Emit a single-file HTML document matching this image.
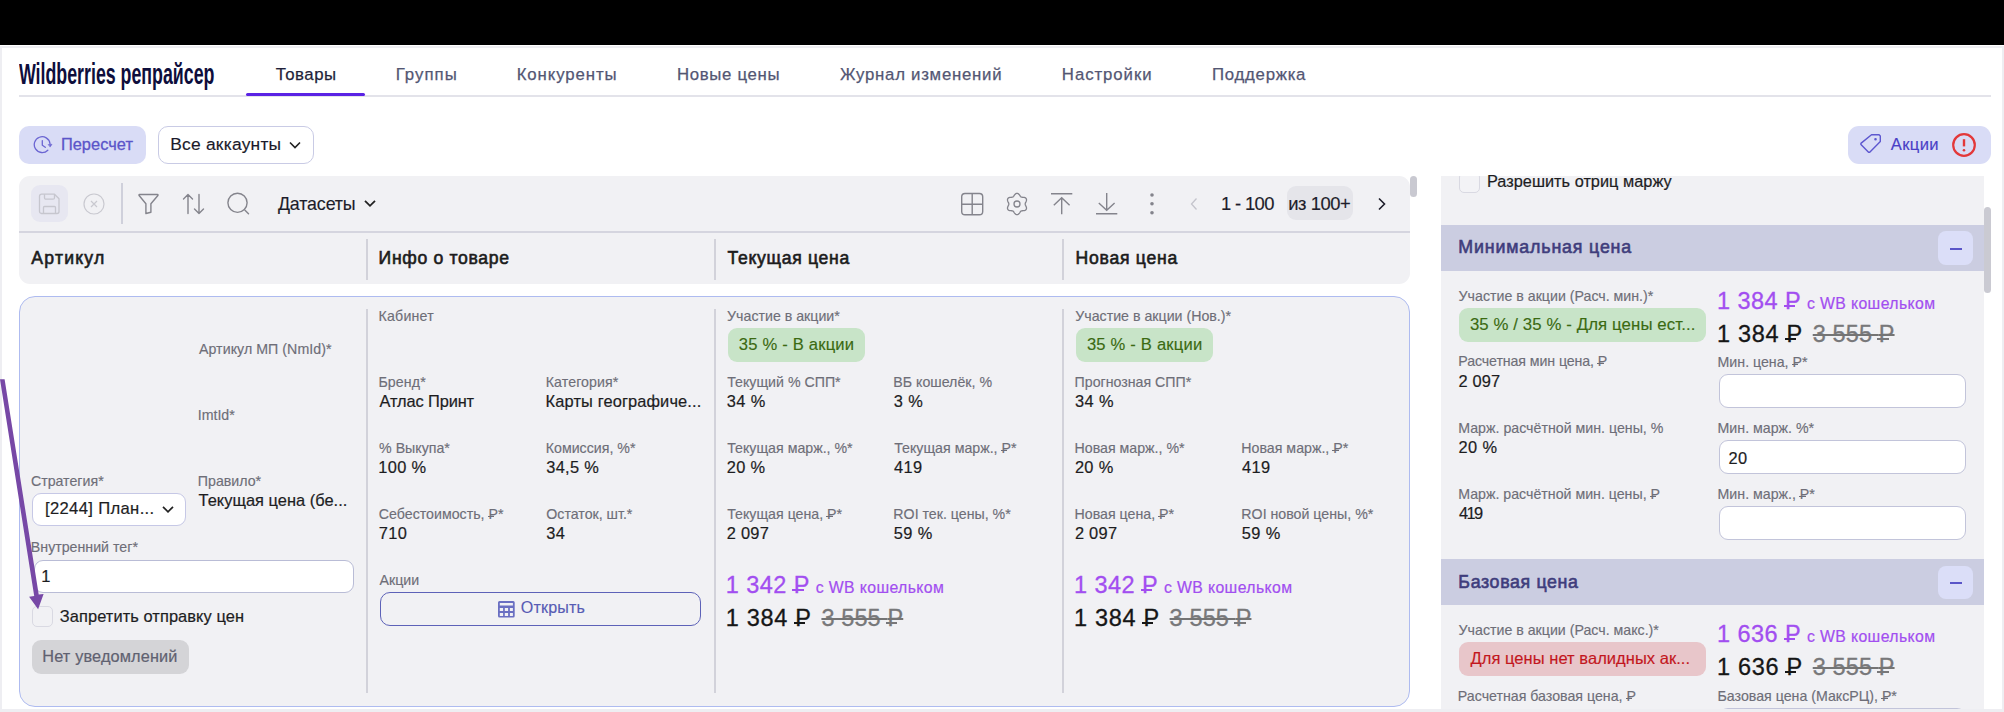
<!DOCTYPE html>
<html><head><meta charset="utf-8"><style>
html,body{margin:0;padding:0;}
body{width:2004px;height:712px;position:relative;overflow:hidden;background:#fff;font-family:"Liberation Sans", sans-serif;}
body>div,body>span,body>svg{position:absolute;}
.t{line-height:1;white-space:nowrap;}
.rub{position:relative;}
.rub::after{content:"";position:absolute;left:-0.06em;width:0.48em;top:0.71em;height:0.08em;background:currentColor;}
</style></head><body>
<div style="left:0px;top:0px;width:2004px;height:45px;background:#000"></div>
<div style="left:0px;top:46px;width:2004px;height:1.5px;background:#eeeef2"></div>
<span class="t" style="left:18.5px;top:60px;font-size:29px;color:#0e0e3c;font-weight:700;transform:scaleX(0.613);transform-origin:0 0;">Wildberries репрайсер</span>
<span class="t" style="left:275.65px;top:67.00px;font-size:16.8px;color:#1f1f3a;font-weight:400;letter-spacing:0.550px;-webkit-text-stroke:0.25px #1f1f3a;">Товары</span>
<span class="t" style="left:395.65px;top:67.00px;font-size:16.8px;color:#535673;font-weight:400;letter-spacing:1.045px;-webkit-text-stroke:0.25px #535673;">Группы</span>
<span class="t" style="left:516.65px;top:67.00px;font-size:16.8px;color:#535673;font-weight:400;letter-spacing:0.903px;-webkit-text-stroke:0.25px #535673;">Конкуренты</span>
<span class="t" style="left:676.95px;top:67.00px;font-size:16.8px;color:#535673;font-weight:400;letter-spacing:0.678px;-webkit-text-stroke:0.25px #535673;">Новые цены</span>
<span class="t" style="left:839.98px;top:67.00px;font-size:16.8px;color:#535673;font-weight:400;letter-spacing:0.743px;-webkit-text-stroke:0.25px #535673;">Журнал изменений</span>
<span class="t" style="left:1061.85px;top:67.00px;font-size:16.8px;color:#535673;font-weight:400;letter-spacing:0.928px;-webkit-text-stroke:0.25px #535673;">Настройки</span>
<span class="t" style="left:1212.05px;top:67.00px;font-size:16.8px;color:#535673;font-weight:400;letter-spacing:0.728px;-webkit-text-stroke:0.25px #535673;">Поддержка</span>
<div style="left:19px;top:95px;width:1972px;height:1.5px;background:#e3e3ea"></div>
<div style="left:246px;top:92.5px;width:119px;height:3px;background:#5a22e4;border-radius:2px"></div>
<div style="left:19px;top:126px;width:127px;height:37.5px;background:#d9dcf6;border-radius:10px"></div>
<svg style="left:33px;top:135px" width="20" height="20" viewBox="0 0 20 20" fill="none" stroke="#6b65d2" stroke-width="1.3" stroke-linecap="round"><path d="M14.8 15.2A7.9 7.9 0 1 1 17.0 8.6"/><path d="M15.5 9.5L19.0 9.3 17.3 11.8z" fill="#6b65d2" stroke-width="0.6" stroke-linejoin="round"/><path d="M9.3 5.6V10.2L12.3 12.3"/></svg>
<span class="t" style="left:60.90px;top:136.00px;font-size:16.4px;color:#5b55c9;font-weight:400;letter-spacing:0.036px;-webkit-text-stroke:0.3px #5b55c9;">Пересчет</span>
<div style="left:158px;top:126px;width:155.5px;height:37.5px;background:#fff;border:1px solid #c9cbe5;border-radius:10px;box-sizing:border-box"></div>
<span class="t" style="left:170.17px;top:136.00px;font-size:17.4px;color:#1a1a2a;font-weight:400;letter-spacing:0.241px;-webkit-text-stroke:0.15px #1a1a2a;">Все аккаунты</span>
<svg style="left:289px;top:141px" width="12" height="8" viewBox="0 0 12 8" fill="none" stroke="#222" stroke-width="1.6"><path d="M1 1.5l5 5 5-5"/></svg>
<div style="left:1847.5px;top:126px;width:143.5px;height:37.5px;background:#d9dcf6;border-radius:11px"></div>
<svg style="left:1859px;top:133px" width="24" height="24" viewBox="0 0 24 24" fill="none" stroke="#5d57cf" stroke-width="1.4" stroke-linejoin="round"><path d="M12.5 1.8h7.6l1.2 1.2v5.6L11 18.9a1.2 1.2 0 0 1-1.7 0L2.2 11.8a1.2 1.2 0 0 1 0-1.7z"/><circle cx="16.5" cy="6.3" r="0.6" fill="#5d57cf"/></svg>
<span class="t" style="left:1890.85px;top:137.00px;font-size:16.6px;color:#4a3fc6;font-weight:400;letter-spacing:0.338px;-webkit-text-stroke:0.15px #4a3fc6;">Акции</span>
<svg style="left:1951px;top:132px" width="26" height="26" viewBox="0 0 26 26" fill="none"><circle cx="13" cy="13" r="10.8" stroke="#e3383a" stroke-width="2.2"/><path d="M13 7.2v7.2" stroke="#e3383a" stroke-width="2.4"/><circle cx="13" cy="18.3" r="1.3" fill="#e3383a"/></svg>
<div style="left:19px;top:176px;width:1391px;height:57px;background:#f1f1f4;border-radius:11px 11px 0 0"></div>
<div style="left:19px;top:231px;width:1391px;height:2px;background:#d5d5df"></div>
<div style="left:31px;top:185px;width:37px;height:37px;background:#e7e7f1;border-radius:9px"></div>
<svg style="left:38px;top:193px" width="23" height="22" viewBox="0 0 23 22" fill="none" stroke="#c6c6ce" stroke-width="1.3" stroke-linejoin="round"><path d="M3.5 1.2h13l4.5 4.5v12.8a2 2 0 0 1-2 2h-15.5a2 2 0 0 1-2-2V3.2a2 2 0 0 1 2-2z"/><path d="M6.5 1.2v3.5a1.5 1.5 0 0 0 1.5 1.5h7a1.5 1.5 0 0 0 1.5-1.5V1.2"/><path d="M5.5 20.5v-6a1 1 0 0 1 1-1h10a1 1 0 0 1 1 1v6"/></svg>
<svg style="left:83px;top:193px" width="23" height="22" viewBox="0 0 23 22" fill="none" stroke="#c9c9d0" stroke-width="1.2"><circle cx="11" cy="11" r="10"/><path d="M8 8l6 6M14 8l-6 6"/></svg>
<div style="left:120.5px;top:183px;width:2px;height:40.5px;background:#cfd0db"></div>
<svg style="left:137px;top:193px" width="23" height="22" viewBox="0 0 23 22" fill="none" stroke="#84848c" stroke-width="1.4" stroke-linejoin="round"><path d="M2.5 1.5h18a.6.6 0 0 1 .4 1l-7 8.2v8.5l-5 1.3v-9.8l-6.8-8.2a.6.6 0 0 1 .4-1z"/></svg>
<svg style="left:182px;top:193px" width="23" height="22" viewBox="0 0 23 22" fill="none" stroke="#84848c" stroke-width="1.4" stroke-linecap="round" stroke-linejoin="round"><path d="M6 20.5V1.5M1.5 6L6 1.5 10.5 6M17 1.5v19M12.5 16l4.5 4.5 4.5-4.5"/></svg>
<svg style="left:227px;top:192px" width="24" height="24" viewBox="0 0 24 24" fill="none" stroke="#84848c" stroke-width="1.4" stroke-linecap="round"><circle cx="10.5" cy="10.8" r="9.6"/><path d="M18 18.3l3.5 3.5"/></svg>
<span class="t" style="left:277.90px;top:196.00px;font-size:17.8px;color:#1d1d2a;font-weight:400;letter-spacing:-0.104px;-webkit-text-stroke:0.15px #1d1d2a;">Датасеты</span>
<svg style="left:364px;top:199px" width="12" height="9" viewBox="0 0 12 9" fill="none" stroke="#222" stroke-width="1.8"><path d="M1 1.8l5 5 5-5"/></svg>
<svg style="left:960px;top:192px" width="24" height="24" viewBox="0 0 24 24" fill="none" stroke="#84848c" stroke-width="1.4"><rect x="1.7" y="1.5" width="21" height="21.3" rx="3.3"/><path d="M12.2 1.5v21.3M1.7 12.2h21"/></svg>
<svg style="left:1004.5px;top:191.5px" width="24" height="24" viewBox="0 0 24 24" fill="none" stroke="#84848c" stroke-width="1.3" stroke-linejoin="round"><path d="M20.15 12.00 L20.20 12.43 L20.34 12.88 L20.56 13.36 L20.82 13.87 L21.08 14.43 L21.31 15.02 L21.46 15.63 L21.51 16.23 L21.43 16.81 L21.22 17.32 L20.88 17.77 L20.42 18.12 L19.88 18.38 L19.27 18.55 L18.65 18.65 L18.03 18.70 L17.45 18.73 L16.93 18.79 L16.47 18.89 L16.08 19.06 L15.73 19.32 L15.41 19.66 L15.11 20.09 L14.79 20.57 L14.43 21.08 L14.03 21.57 L13.59 22.01 L13.09 22.35 L12.55 22.57 L12.00 22.65 L11.45 22.57 L10.91 22.35 L10.41 22.01 L9.97 21.57 L9.57 21.08 L9.21 20.57 L8.89 20.09 L8.59 19.66 L8.27 19.32 L7.93 19.06 L7.53 18.89 L7.07 18.79 L6.55 18.73 L5.97 18.70 L5.35 18.65 L4.73 18.55 L4.12 18.38 L3.58 18.12 L3.12 17.77 L2.78 17.32 L2.57 16.81 L2.49 16.23 L2.54 15.63 L2.69 15.02 L2.92 14.43 L3.18 13.87 L3.44 13.36 L3.66 12.88 L3.80 12.43 L3.85 12.00 L3.80 11.57 L3.66 11.12 L3.44 10.64 L3.18 10.13 L2.92 9.57 L2.69 8.98 L2.54 8.37 L2.49 7.77 L2.57 7.19 L2.78 6.68 L3.12 6.23 L3.58 5.88 L4.12 5.62 L4.73 5.45 L5.35 5.35 L5.97 5.30 L6.55 5.27 L7.07 5.21 L7.53 5.11 L7.92 4.94 L8.27 4.68 L8.59 4.34 L8.89 3.91 L9.21 3.43 L9.57 2.92 L9.97 2.43 L10.41 1.99 L10.91 1.65 L11.45 1.43 L12.00 1.35 L12.55 1.43 L13.09 1.65 L13.59 1.99 L14.03 2.43 L14.43 2.92 L14.79 3.43 L15.11 3.91 L15.41 4.34 L15.73 4.68 L16.08 4.94 L16.47 5.11 L16.93 5.21 L17.45 5.27 L18.03 5.30 L18.65 5.35 L19.27 5.45 L19.88 5.62 L20.42 5.88 L20.88 6.23 L21.22 6.68 L21.43 7.19 L21.51 7.77 L21.46 8.37 L21.31 8.98 L21.08 9.57 L20.82 10.13 L20.56 10.64 L20.34 11.12 L20.20 11.57 L20.15 12.00z"/><circle cx="12" cy="12" r="3"/></svg>
<svg style="left:1050px;top:192px" width="24" height="24" viewBox="0 0 24 24" fill="none" stroke="#84848c" stroke-width="1.4" stroke-linecap="butt"><path d="M1 1.7h21.3M11.7 22.3V5.8M3.8 13.2L11.7 5.8 19.6 13.2"/></svg>
<svg style="left:1095px;top:192px" width="24" height="24" viewBox="0 0 24 24" fill="none" stroke="#84848c" stroke-width="1.4" stroke-linecap="butt"><path d="M1 21.7h21.3M11.7 1v17.2M3.8 11L11.7 18.2 19.6 11"/></svg>
<svg style="left:1146.5px;top:192px" width="10" height="24" viewBox="0 0 10 24" fill="#84848c"><circle cx="5" cy="3" r="1.8"/><circle cx="5" cy="11.8" r="1.8"/><circle cx="5" cy="20.8" r="1.8"/></svg>
<svg style="left:1189px;top:197px" width="10" height="14" viewBox="0 0 10 14" fill="none" stroke="#c4c4cc" stroke-width="1.3"><path d="M7.5 1.5L2.5 7 7.5 12.5"/></svg>
<span class="t" style="left:1221.08px;top:195.00px;font-size:18.4px;color:#1d1d2a;font-weight:400;letter-spacing:-0.654px;-webkit-text-stroke:0.15px #1d1d2a;">1 - 100</span>
<div style="left:1286.5px;top:186px;width:66px;height:34px;background:#e5e5ea;border-radius:9px"></div>
<span class="t" style="left:1288.20px;top:195.00px;font-size:18.4px;color:#1d1d2a;font-weight:400;letter-spacing:-0.438px;-webkit-text-stroke:0.15px #1d1d2a;">из 100+</span>
<svg style="left:1377px;top:197px" width="10" height="14" viewBox="0 0 10 14" fill="none" stroke="#1d1d2a" stroke-width="1.6"><path d="M2 1.5L7.5 7 2 12.5"/></svg>
<div style="left:1410px;top:176px;width:7px;height:21px;background:#c9c9d1;border-radius:4px"></div>
<div style="left:19px;top:233px;width:1391px;height:51px;background:#f1f1f4;border-radius:0 0 11px 11px"></div>
<div style="left:365.5px;top:238.5px;width:2px;height:41px;background:#d2d2da"></div>
<div style="left:713.5px;top:238.5px;width:2px;height:41px;background:#d2d2da"></div>
<div style="left:1062px;top:238.5px;width:2px;height:41px;background:#d2d2da"></div>
<span class="t" style="left:31.35px;top:250.00px;font-size:17.6px;color:#1c1c1c;font-weight:400;letter-spacing:1.217px;-webkit-text-stroke:0.6px #1c1c1c;">Артикул</span>
<span class="t" style="left:378.58px;top:250.00px;font-size:17.6px;color:#1c1c1c;font-weight:400;letter-spacing:0.679px;-webkit-text-stroke:0.6px #1c1c1c;">Инфо о товаре</span>
<span class="t" style="left:727.57px;top:250.00px;font-size:17.6px;color:#1c1c1c;font-weight:400;letter-spacing:0.684px;-webkit-text-stroke:0.6px #1c1c1c;">Текущая цена</span>
<span class="t" style="left:1075.57px;top:250.00px;font-size:17.6px;color:#1c1c1c;font-weight:400;letter-spacing:0.739px;-webkit-text-stroke:0.6px #1c1c1c;">Новая цена</span>
<div style="left:19px;top:296px;width:1391px;height:411px;background:#f1f1f4;border:1.5px solid #aebbf0;border-radius:16px;box-sizing:border-box"></div>
<div style="left:365.5px;top:308.5px;width:2px;height:384px;background:#d2d2da"></div>
<div style="left:713.5px;top:308.5px;width:2px;height:384px;background:#d2d2da"></div>
<div style="left:1062px;top:308.5px;width:2px;height:384px;background:#d2d2da"></div>
<span class="t" style="left:198.97px;top:342.00px;font-size:14.2px;color:#6e6e78;font-weight:400;letter-spacing:0.051px;-webkit-text-stroke:0.15px #6e6e78;">Артикул МП (NmId)*</span>
<span class="t" style="left:197.72px;top:408.00px;font-size:14.2px;color:#6e6e78;font-weight:400;letter-spacing:0.000px;-webkit-text-stroke:0.15px #6e6e78;">ImtId*</span>
<span class="t" style="left:30.92px;top:474.00px;font-size:14.2px;color:#6e6e78;font-weight:400;letter-spacing:0.000px;-webkit-text-stroke:0.15px #6e6e78;">Стратегия*</span>
<span class="t" style="left:197.85px;top:474.00px;font-size:14.2px;color:#6e6e78;font-weight:400;letter-spacing:0.000px;-webkit-text-stroke:0.15px #6e6e78;">Правило*</span>
<span class="t" style="left:198.57px;top:492.00px;font-size:16.4px;color:#1d1d1f;font-weight:400;letter-spacing:0.028px;-webkit-text-stroke:0.2px #1d1d1f;">Текущая цена (бе...</span>
<div style="left:32px;top:493px;width:154px;height:33px;background:#fff;border:1px solid #c6c8e6;border-radius:9px;box-sizing:border-box"></div>
<span class="t" style="left:44.92px;top:501.00px;font-size:16.6px;color:#1d1d1f;font-weight:400;letter-spacing:0.362px;-webkit-text-stroke:0.2px #1d1d1f;">[2244] План...</span>
<svg style="left:161.5px;top:505px" width="12" height="9" viewBox="0 0 12 9" fill="none" stroke="#222" stroke-width="1.7"><path d="M1 1.8l5 5 5-5"/></svg>
<span class="t" style="left:30.85px;top:540.00px;font-size:14.2px;color:#6e6e78;font-weight:400;letter-spacing:0.000px;-webkit-text-stroke:0.15px #6e6e78;">Внутренний тег*</span>
<div style="left:34px;top:559.5px;width:320px;height:33px;background:#fff;border:1px solid #b9bcd6;border-radius:9px;box-sizing:border-box"></div>
<span class="t" style="left:41.25px;top:568.00px;font-size:16.5px;color:#1d1d1f;font-weight:400;letter-spacing:0.000px;-webkit-text-stroke:0.2px #1d1d1f;">1</span>
<div style="left:32px;top:606px;width:20.5px;height:20.5px;border:1px solid #d9d9e2;border-radius:5px;box-sizing:border-box"></div>
<span class="t" style="left:59.85px;top:608.00px;font-size:16.4px;color:#1d1d1f;font-weight:400;letter-spacing:0.082px;-webkit-text-stroke:0.2px #1d1d1f;">Запретить отправку цен</span>
<div style="left:32px;top:639.5px;width:156.5px;height:34px;background:#d4d4d7;border-radius:9px"></div>
<span class="t" style="left:42.27px;top:648.00px;font-size:16.3px;color:#5f6170;font-weight:400;letter-spacing:0.152px;-webkit-text-stroke:0.2px #5f6170;">Нет уведомлений</span>
<span class="t" style="left:378.45px;top:309.00px;font-size:14.2px;color:#6e6e78;font-weight:400;letter-spacing:0.225px;-webkit-text-stroke:0.15px #6e6e78;">Кабинет</span>
<span class="t" style="left:378.45px;top:375.00px;font-size:14.2px;color:#6e6e78;font-weight:400;letter-spacing:0.100px;-webkit-text-stroke:0.15px #6e6e78;">Бренд*</span>
<span class="t" style="left:545.75px;top:375.00px;font-size:14.2px;color:#6e6e78;font-weight:400;letter-spacing:0.086px;-webkit-text-stroke:0.15px #6e6e78;">Категория*</span>
<span class="t" style="left:379.55px;top:393.00px;font-size:16.4px;color:#1d1d1f;font-weight:400;letter-spacing:-0.120px;-webkit-text-stroke:0.2px #1d1d1f;">Атлас Принт</span>
<span class="t" style="left:545.60px;top:393.00px;font-size:16.4px;color:#1d1d1f;font-weight:400;letter-spacing:0.132px;-webkit-text-stroke:0.2px #1d1d1f;">Карты географиче...</span>
<span class="t" style="left:379.08px;top:441.00px;font-size:14.2px;color:#6e6e78;font-weight:400;letter-spacing:0.000px;-webkit-text-stroke:0.15px #6e6e78;">% Выкупа*</span>
<span class="t" style="left:545.75px;top:441.00px;font-size:14.2px;color:#6e6e78;font-weight:400;letter-spacing:0.000px;-webkit-text-stroke:0.15px #6e6e78;">Комиссия, %*</span>
<span class="t" style="left:378.30px;top:459.00px;font-size:16.4px;color:#1d1d1f;font-weight:400;letter-spacing:0.344px;-webkit-text-stroke:0.2px #1d1d1f;">100 %</span>
<span class="t" style="left:546.23px;top:459.00px;font-size:16.4px;color:#1d1d1f;font-weight:400;letter-spacing:0.300px;-webkit-text-stroke:0.2px #1d1d1f;">34,5 %</span>
<span class="t" style="left:378.83px;top:507.00px;font-size:14.2px;color:#6e6e78;font-weight:400;letter-spacing:0.000px;-webkit-text-stroke:0.15px #6e6e78;">Себестоимость, <span class="rub">Р</span>*</span>
<span class="t" style="left:546.25px;top:507.00px;font-size:14.2px;color:#6e6e78;font-weight:400;letter-spacing:0.000px;-webkit-text-stroke:0.15px #6e6e78;">Остаток, шт.*</span>
<span class="t" style="left:378.80px;top:525.00px;font-size:16.4px;color:#1d1d1f;font-weight:400;letter-spacing:0.312px;-webkit-text-stroke:0.2px #1d1d1f;">710</span>
<span class="t" style="left:546.23px;top:525.00px;font-size:16.4px;color:#1d1d1f;font-weight:400;letter-spacing:0.500px;-webkit-text-stroke:0.2px #1d1d1f;">34</span>
<span class="t" style="left:379.58px;top:573.00px;font-size:14.2px;color:#6e6e78;font-weight:400;letter-spacing:0.000px;-webkit-text-stroke:0.15px #6e6e78;">Акции</span>
<div style="left:380.2px;top:592px;width:321.2px;height:33.5px;border:1.5px solid #5d62b8;border-radius:10px;box-sizing:border-box"></div>
<svg style="left:498px;top:601.4px" width="17" height="17" viewBox="0 0 17 17" fill="#6a6fc2"><path fill-rule="evenodd" d="M1.5 0h13.7a1.5 1.5 0 0 1 1.5 1.5v13.4a1.5 1.5 0 0 1-1.5 1.5H1.5A1.5 1.5 0 0 1 0 14.9V1.5A1.5 1.5 0 0 1 1.5 0z M1.8 2.1v2.4h13.1V2.1z M1.8 6.9v3h3.3v-3z M6.8 6.9v3h3.3v-3z M11.9 6.9v3h3v-3z M1.8 12v2.9h3.3V12z M6.8 12v2.9h3.3V12z M11.9 12v2.9h3V12z"/></svg>
<span class="t" style="left:520.70px;top:599.00px;font-size:16.1px;color:#575cb4;font-weight:400;letter-spacing:0.171px;-webkit-text-stroke:0.15px #575cb4;">Открыть</span>
<div style="left:727.5px;top:328px;width:137px;height:33.5px;background:#c8e4c8;border-radius:9px"></div>
<span class="t" style="left:738.72px;top:337.00px;font-size:16.6px;color:#3b6a12;font-weight:400;letter-spacing:0.198px;-webkit-text-stroke:0.15px #3b6a12;">35 % - В акции</span>
<span class="t" style="left:727.10px;top:309.00px;font-size:14.2px;color:#6e6e78;font-weight:400;letter-spacing:0.000px;-webkit-text-stroke:0.15px #6e6e78;">Участие в акции*</span>
<span class="t" style="left:727.23px;top:375.00px;font-size:14.2px;color:#6e6e78;font-weight:400;letter-spacing:0.000px;-webkit-text-stroke:0.15px #6e6e78;">Текущий % СПП*</span>
<span class="t" style="left:726.83px;top:393.00px;font-size:16.4px;color:#1d1d1f;font-weight:400;letter-spacing:0.375px;-webkit-text-stroke:0.2px #1d1d1f;">34 %</span>
<span class="t" style="left:893.35px;top:375.00px;font-size:14.2px;color:#6e6e78;font-weight:400;letter-spacing:0.000px;-webkit-text-stroke:0.15px #6e6e78;">ВБ кошелёк, %</span>
<span class="t" style="left:893.83px;top:393.00px;font-size:16.4px;color:#1d1d1f;font-weight:400;letter-spacing:0.375px;-webkit-text-stroke:0.2px #1d1d1f;">3 %</span>
<span class="t" style="left:727.23px;top:441.00px;font-size:14.2px;color:#6e6e78;font-weight:400;letter-spacing:0.000px;-webkit-text-stroke:0.15px #6e6e78;">Текущая марж., %*</span>
<span class="t" style="left:726.70px;top:459.00px;font-size:16.4px;color:#1d1d1f;font-weight:400;letter-spacing:0.333px;-webkit-text-stroke:0.2px #1d1d1f;">20 %</span>
<span class="t" style="left:894.23px;top:441.00px;font-size:14.2px;color:#6e6e78;font-weight:400;letter-spacing:0.000px;-webkit-text-stroke:0.15px #6e6e78;">Текущая марж., <span class="rub">Р</span>*</span>
<span class="t" style="left:894.08px;top:459.00px;font-size:16.4px;color:#1d1d1f;font-weight:400;letter-spacing:0.375px;-webkit-text-stroke:0.2px #1d1d1f;">419</span>
<span class="t" style="left:727.23px;top:507.00px;font-size:14.2px;color:#6e6e78;font-weight:400;letter-spacing:0.000px;-webkit-text-stroke:0.15px #6e6e78;">Текущая цена, <span class="rub">Р</span>*</span>
<span class="t" style="left:726.70px;top:525.00px;font-size:16.4px;color:#1d1d1f;font-weight:400;letter-spacing:0.281px;-webkit-text-stroke:0.2px #1d1d1f;">2 097</span>
<span class="t" style="left:893.35px;top:507.00px;font-size:14.2px;color:#6e6e78;font-weight:400;letter-spacing:0.000px;-webkit-text-stroke:0.15px #6e6e78;">ROI тек. цены, %*</span>
<span class="t" style="left:893.83px;top:525.00px;font-size:16.4px;color:#1d1d1f;font-weight:400;letter-spacing:0.375px;-webkit-text-stroke:0.2px #1d1d1f;">59 %</span>
<span class="t" style="left:725.75px;top:574.00px;font-size:23.5px;color:#a24ef0;font-weight:400;letter-spacing:0.446px;-webkit-text-stroke:0.3px #a24ef0;">1 342 <span class="rub">Р</span></span>
<span class="t" style="left:815.70px;top:580.00px;font-size:15.8px;color:#a24ef0;font-weight:400;letter-spacing:0.387px;-webkit-text-stroke:0.2px #a24ef0;">с WB кошельком</span>
<span class="t" style="left:725.75px;top:607.00px;font-size:23.5px;color:#161616;font-weight:400;letter-spacing:0.696px;-webkit-text-stroke:0.3px #161616;">1 384 <span class="rub">Р</span></span>
<span class="t" style="left:821.42px;top:607.00px;font-size:23.5px;color:#78787a;font-weight:400;letter-spacing:0.117px;-webkit-text-stroke:0.3px #78787a;text-decoration:line-through;text-decoration-color:#747474;text-decoration-thickness:2px">3 555 <span class="rub">Р</span></span>
<div style="left:1075.7px;top:328px;width:137.3px;height:34px;background:#c8e4c8;border-radius:9px"></div>
<span class="t" style="left:1086.92px;top:337.00px;font-size:16.6px;color:#3b6a12;font-weight:400;letter-spacing:0.198px;-webkit-text-stroke:0.15px #3b6a12;">35 % - В акции</span>
<span class="t" style="left:1075.30px;top:309.00px;font-size:14.2px;color:#6e6e78;font-weight:400;letter-spacing:0.000px;-webkit-text-stroke:0.15px #6e6e78;">Участие в акции (Нов.)*</span>
<span class="t" style="left:1074.55px;top:375.00px;font-size:14.2px;color:#6e6e78;font-weight:400;letter-spacing:0.000px;-webkit-text-stroke:0.15px #6e6e78;">Прогнозная СПП*</span>
<span class="t" style="left:1075.03px;top:393.00px;font-size:16.4px;color:#1d1d1f;font-weight:400;letter-spacing:0.375px;-webkit-text-stroke:0.2px #1d1d1f;">34 %</span>
<span class="t" style="left:1074.55px;top:441.00px;font-size:14.2px;color:#6e6e78;font-weight:400;letter-spacing:0.000px;-webkit-text-stroke:0.15px #6e6e78;">Новая марж., %*</span>
<span class="t" style="left:1074.90px;top:459.00px;font-size:16.4px;color:#1d1d1f;font-weight:400;letter-spacing:0.333px;-webkit-text-stroke:0.2px #1d1d1f;">20 %</span>
<span class="t" style="left:1241.35px;top:441.00px;font-size:14.2px;color:#6e6e78;font-weight:400;letter-spacing:0.000px;-webkit-text-stroke:0.15px #6e6e78;">Новая марж., <span class="rub">Р</span>*</span>
<span class="t" style="left:1242.08px;top:459.00px;font-size:16.4px;color:#1d1d1f;font-weight:400;letter-spacing:0.375px;-webkit-text-stroke:0.2px #1d1d1f;">419</span>
<span class="t" style="left:1074.55px;top:507.00px;font-size:14.2px;color:#6e6e78;font-weight:400;letter-spacing:0.000px;-webkit-text-stroke:0.15px #6e6e78;">Новая цена, <span class="rub">Р</span>*</span>
<span class="t" style="left:1074.90px;top:525.00px;font-size:16.4px;color:#1d1d1f;font-weight:400;letter-spacing:0.281px;-webkit-text-stroke:0.2px #1d1d1f;">2 097</span>
<span class="t" style="left:1241.35px;top:507.00px;font-size:14.2px;color:#6e6e78;font-weight:400;letter-spacing:0.000px;-webkit-text-stroke:0.15px #6e6e78;">ROI новой цены, %*</span>
<span class="t" style="left:1241.83px;top:525.00px;font-size:16.4px;color:#1d1d1f;font-weight:400;letter-spacing:0.375px;-webkit-text-stroke:0.2px #1d1d1f;">59 %</span>
<span class="t" style="left:1073.95px;top:574.00px;font-size:23.5px;color:#a24ef0;font-weight:400;letter-spacing:0.446px;-webkit-text-stroke:0.3px #a24ef0;">1 342 <span class="rub">Р</span></span>
<span class="t" style="left:1163.90px;top:580.00px;font-size:15.8px;color:#a24ef0;font-weight:400;letter-spacing:0.387px;-webkit-text-stroke:0.2px #a24ef0;">с WB кошельком</span>
<span class="t" style="left:1073.95px;top:607.00px;font-size:23.5px;color:#161616;font-weight:400;letter-spacing:0.696px;-webkit-text-stroke:0.3px #161616;">1 384 <span class="rub">Р</span></span>
<span class="t" style="left:1169.62px;top:607.00px;font-size:23.5px;color:#78787a;font-weight:400;letter-spacing:0.117px;-webkit-text-stroke:0.3px #78787a;text-decoration:line-through;text-decoration-color:#747474;text-decoration-thickness:2px">3 555 <span class="rub">Р</span></span>
<div style="left:1441px;top:176px;width:543px;height:533px;background:#f1f1f4"></div>
<div style="left:1459px;top:172px;width:21px;height:21px;border:1px solid #d9d9e2;border-radius:5px;box-sizing:border-box;background:#f3f3f6"></div>
<div style="left:1441px;top:172px;width:543px;height:4px;background:#fff"></div>
<span class="t" style="left:1486.98px;top:173.00px;font-size:16.3px;color:#1d1d1f;font-weight:400;letter-spacing:0.030px;-webkit-text-stroke:0.2px #1d1d1f;">Разрешить отриц маржу</span>
<div style="left:1984px;top:207px;width:7px;height:86px;background:#cacad2;border-radius:4px"></div>
<div style="left:1441px;top:224.6px;width:543px;height:46px;background:#cbcde1"></div>
<span class="t" style="left:1458.35px;top:239.00px;font-size:17.8px;color:#3f3d7c;font-weight:400;letter-spacing:0.848px;-webkit-text-stroke:0.6px #3f3d7c;">Минимальная цена</span>
<div style="left:1938px;top:231.4px;width:34.5px;height:33.5px;background:#dbdef8;border-radius:8px"></div>
<div style="left:1949.5px;top:247.9px;width:12.5px;height:2.2px;background:#5a55c8"></div>
<span class="t" style="left:1458.60px;top:289.00px;font-size:14.2px;color:#6e6e78;font-weight:400;letter-spacing:0.002px;-webkit-text-stroke:0.15px #6e6e78;">Участие в акции (Расч. мин.)*</span>
<div style="left:1458.7px;top:308px;width:247.7px;height:33.5px;background:#c8e4c8;border-radius:9px"></div>
<span class="t" style="left:1469.90px;top:317.00px;font-size:16.8px;color:#3b6a12;font-weight:400;letter-spacing:0.103px;-webkit-text-stroke:0.15px #3b6a12;">35 % / 35 % - Для цены ест...</span>
<span class="t" style="left:1716.95px;top:290.00px;font-size:23.5px;color:#a24ef0;font-weight:400;letter-spacing:0.446px;-webkit-text-stroke:0.3px #a24ef0;">1 384 <span class="rub">Р</span></span>
<span class="t" style="left:1806.90px;top:296.00px;font-size:15.8px;color:#a24ef0;font-weight:400;letter-spacing:0.387px;-webkit-text-stroke:0.2px #a24ef0;">с WB кошельком</span>
<span class="t" style="left:1716.95px;top:323.00px;font-size:23.5px;color:#161616;font-weight:400;letter-spacing:0.696px;-webkit-text-stroke:0.3px #161616;">1 384 <span class="rub">Р</span></span>
<span class="t" style="left:1812.72px;top:323.00px;font-size:23.5px;color:#78787a;font-weight:400;letter-spacing:0.117px;-webkit-text-stroke:0.3px #78787a;text-decoration:line-through;text-decoration-color:#747474;text-decoration-thickness:2px">3 555 <span class="rub">Р</span></span>
<span class="t" style="left:1458.25px;top:354.00px;font-size:14.2px;color:#6e6e78;font-weight:400;letter-spacing:-0.091px;-webkit-text-stroke:0.15px #6e6e78;">Расчетная мин цена, <span class="rub">Р</span></span>
<span class="t" style="left:1458.60px;top:373.00px;font-size:16.4px;color:#1d1d1f;font-weight:400;letter-spacing:0.125px;-webkit-text-stroke:0.2px #1d1d1f;">2 097</span>
<span class="t" style="left:1717.55px;top:355.00px;font-size:14.2px;color:#6e6e78;font-weight:400;letter-spacing:0.000px;-webkit-text-stroke:0.15px #6e6e78;">Мин. цена, <span class="rub">Р</span>*</span>
<div style="left:1718.7px;top:374px;width:247.7px;height:33.5px;background:#fff;border:1px solid #c2c4da;border-radius:9px;box-sizing:border-box"></div>
<span class="t" style="left:1458.25px;top:421.00px;font-size:14.2px;color:#6e6e78;font-weight:400;letter-spacing:0.003px;-webkit-text-stroke:0.15px #6e6e78;">Марж. расчётной мин. цены, %</span>
<span class="t" style="left:1458.60px;top:439.00px;font-size:16.4px;color:#1d1d1f;font-weight:400;letter-spacing:0.333px;-webkit-text-stroke:0.2px #1d1d1f;">20 %</span>
<span class="t" style="left:1717.55px;top:421.00px;font-size:14.2px;color:#6e6e78;font-weight:400;letter-spacing:0.000px;-webkit-text-stroke:0.15px #6e6e78;">Мин. марж. %*</span>
<div style="left:1718.7px;top:440.4px;width:247.7px;height:33.5px;background:#fff;border:1px solid #c2c4da;border-radius:9px;box-sizing:border-box"></div>
<span class="t" style="left:1728.50px;top:450.00px;font-size:16.4px;color:#1d1d1f;font-weight:400;letter-spacing:0.375px;-webkit-text-stroke:0.2px #1d1d1f;">20</span>
<span class="t" style="left:1458.25px;top:487.00px;font-size:14.2px;color:#6e6e78;font-weight:400;letter-spacing:-0.005px;-webkit-text-stroke:0.15px #6e6e78;">Марж. расчётной мин. цены, <span class="rub">Р</span></span>
<span class="t" style="left:1458.98px;top:505.00px;font-size:16.4px;color:#1d1d1f;font-weight:400;letter-spacing:-1.625px;-webkit-text-stroke:0.2px #1d1d1f;">419</span>
<span class="t" style="left:1717.55px;top:487.00px;font-size:14.2px;color:#6e6e78;font-weight:400;letter-spacing:0.000px;-webkit-text-stroke:0.15px #6e6e78;">Мин. марж., <span class="rub">Р</span>*</span>
<div style="left:1718.7px;top:506.3px;width:247.7px;height:33.5px;background:#fff;border:1px solid #c2c4da;border-radius:9px;box-sizing:border-box"></div>
<div style="left:1441px;top:559px;width:543px;height:46px;background:#cbcde1"></div>
<span class="t" style="left:1458.35px;top:574.00px;font-size:17.8px;color:#3f3d7c;font-weight:400;letter-spacing:0.650px;-webkit-text-stroke:0.6px #3f3d7c;">Базовая цена</span>
<div style="left:1938px;top:565.8px;width:34.5px;height:33.5px;background:#dbdef8;border-radius:8px"></div>
<div style="left:1949.5px;top:582.3px;width:12.5px;height:2.2px;background:#5a55c8"></div>
<span class="t" style="left:1458.60px;top:623.00px;font-size:14.2px;color:#6e6e78;font-weight:400;letter-spacing:0.000px;-webkit-text-stroke:0.15px #6e6e78;">Участие в акции (Расч. макс.)*</span>
<div style="left:1458.9px;top:641.5px;width:247.6px;height:34.3px;background:#e8c6ca;border-radius:9px"></div>
<span class="t" style="left:1470.58px;top:650.00px;font-size:16.5px;color:#c3161d;font-weight:400;letter-spacing:0.040px;-webkit-text-stroke:0.15px #c3161d;">Для цены нет валидных ак...</span>
<span class="t" style="left:1716.95px;top:623.00px;font-size:23.5px;color:#a24ef0;font-weight:400;letter-spacing:0.446px;-webkit-text-stroke:0.3px #a24ef0;">1 636 <span class="rub">Р</span></span>
<span class="t" style="left:1806.90px;top:629.00px;font-size:15.8px;color:#a24ef0;font-weight:400;letter-spacing:0.387px;-webkit-text-stroke:0.2px #a24ef0;">с WB кошельком</span>
<span class="t" style="left:1716.95px;top:656.00px;font-size:23.5px;color:#161616;font-weight:400;letter-spacing:0.696px;-webkit-text-stroke:0.3px #161616;">1 636 <span class="rub">Р</span></span>
<span class="t" style="left:1812.72px;top:656.00px;font-size:23.5px;color:#78787a;font-weight:400;letter-spacing:0.117px;-webkit-text-stroke:0.3px #78787a;text-decoration:line-through;text-decoration-color:#747474;text-decoration-thickness:2px">3 555 <span class="rub">Р</span></span>
<span class="t" style="left:1457.85px;top:689.00px;font-size:14.2px;color:#6e6e78;font-weight:400;letter-spacing:0.000px;-webkit-text-stroke:0.15px #6e6e78;">Расчетная базовая цена, <span class="rub">Р</span></span>
<span class="t" style="left:1458.20px;top:707.00px;font-size:16.4px;color:#1d1d1f;font-weight:400;letter-spacing:0.281px;-webkit-text-stroke:0.2px #1d1d1f;">2 472</span>
<span class="t" style="left:1717.55px;top:689.00px;font-size:14.2px;color:#6e6e78;font-weight:400;letter-spacing:0.000px;-webkit-text-stroke:0.15px #6e6e78;">Базовая цена (МаксРЦ), <span class="rub">Р</span>*</span>
<div style="left:1718.7px;top:708px;width:247.7px;height:33.5px;background:#fff;border:1px solid #c2c4da;border-radius:9px;box-sizing:border-box"></div>
<div style="left:0px;top:46px;width:2px;height:666px;background:#eeeef2"></div>
<div style="left:2002px;top:46px;width:2px;height:666px;background:#eeeef2"></div>
<div style="left:0px;top:709px;width:2004px;height:3px;background:#eeeef2"></div>
<svg style="left:0;top:370px" width="60" height="250" viewBox="0 370 60 250"><path d="M0 379.3H4.6L38.7 594.6 43.6 594 38.1 609.2 29.1 596.7 34.2 596.1z" fill="#7748a6"/></svg>
</body></html>
